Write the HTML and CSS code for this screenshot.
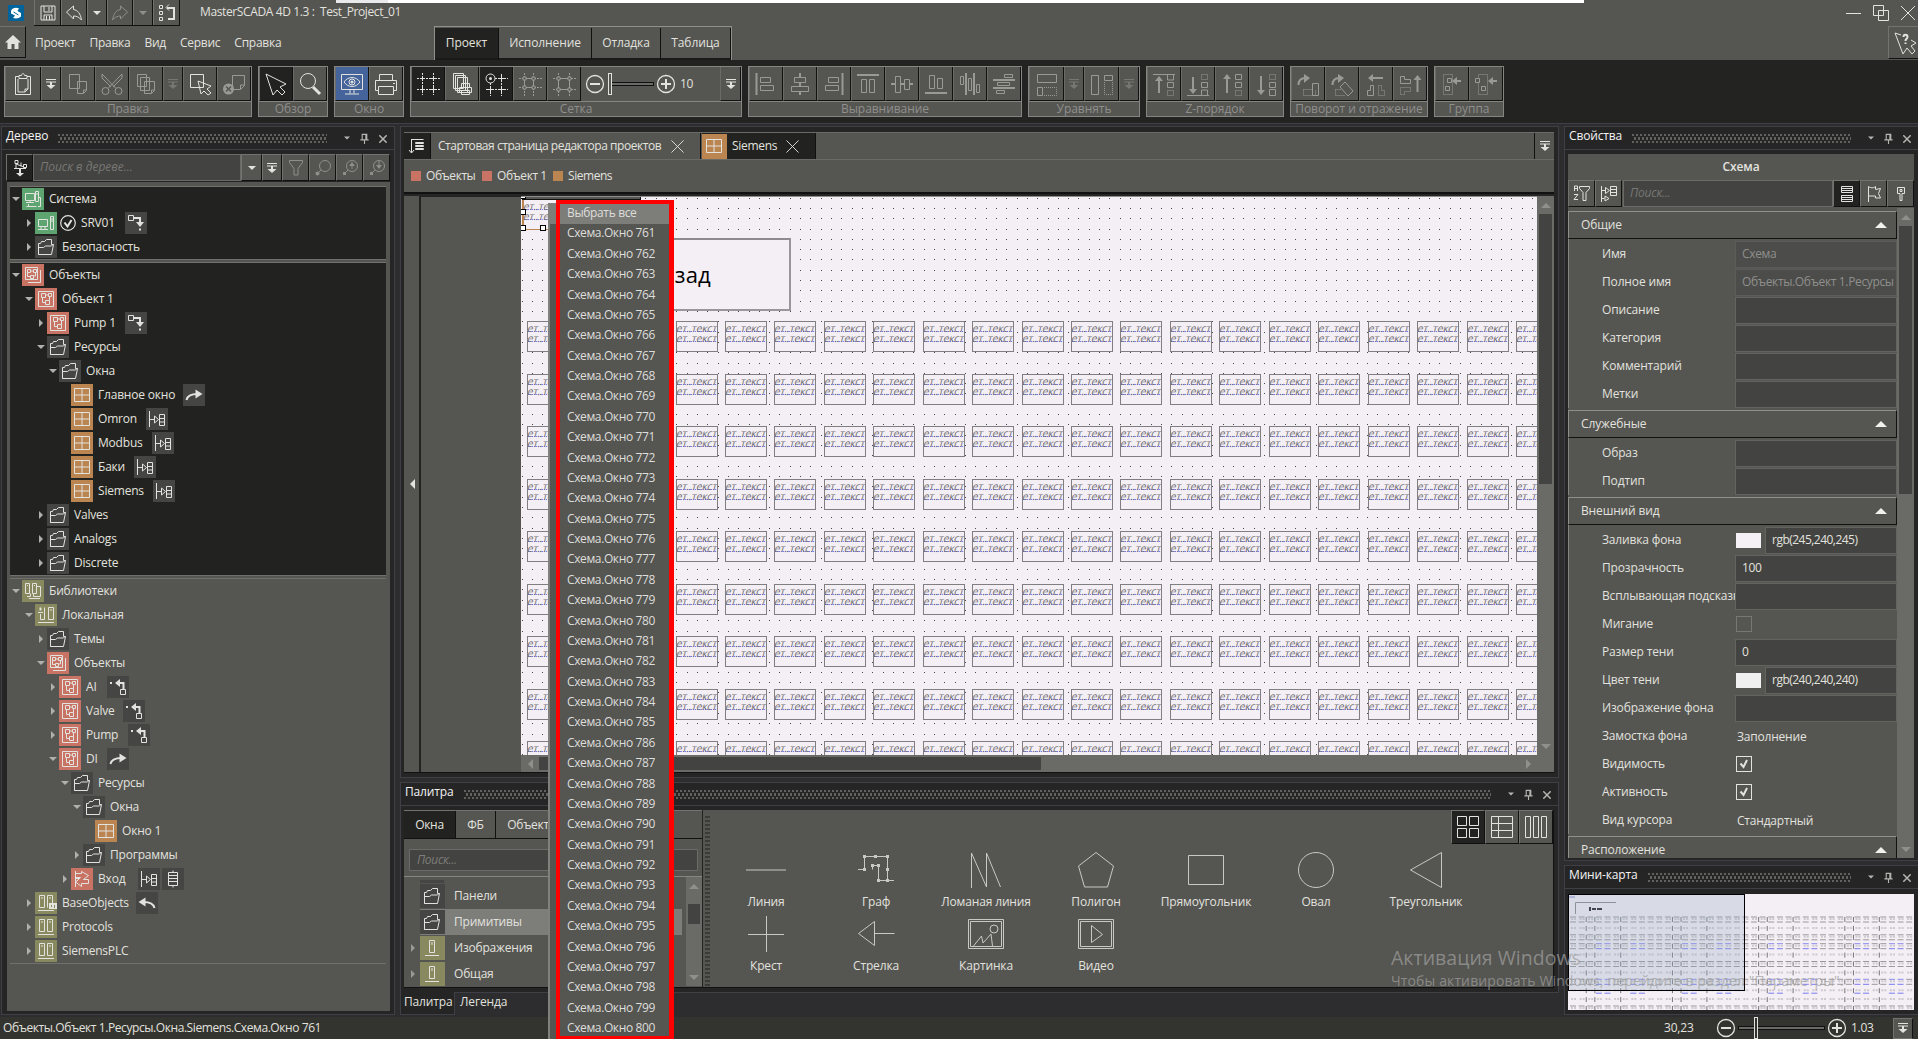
FILE: index.html
```html
<!DOCTYPE html>
<html lang="ru">
<head>
<meta charset="utf-8">
<title>MasterSCADA 4D 1.3</title>
<link rel="stylesheet" href="styles.css">
</head>
<body>
<svg class="defs" width="0" height="0" aria-hidden="true">
  <symbol id="save" viewBox="0 0 24 24"><path d="M5 5h14v14H5zM8 5v6h8V5M13 6v4M8 19v-5h8v5M10.500 15v4M13.500 15v4"/></symbol>
  <symbol id="undo" viewBox="0 0 24 24"><path d="M4.500 11l7-6v3.500c4 .5 7 4 8 10.500-2.500-3-5-4-8-4V18z"/></symbol>
  <symbol id="redo" viewBox="0 0 24 24"><path d="M19.500 11l-7-6v3.500c-4 .5-7 4-8 10.500 2.500-3 5-4 8-4V18z"/></symbol>
  <symbol id="swap" viewBox="0 0 24 24"><path d="M4.500 4.500h3v3h-3zM4.500 10.500h3v3h-3zM4.500 16.500h3v3h-3zM14 3.500l-3 3 3 3" /><path d="M12 7h7v11h-6" stroke-width="2"/></symbol>
  <symbol id="drop" viewBox="0 0 24 24"><path class="f" d="M8 10h8l-4 4z"/></symbol>
  <symbol id="more" viewBox="0 0 24 24"><path d="M7 7.500h10M7 10h10"/><path class="f" d="M11 10h2v3h3.500l-4.500 4-4.500-4H11z"/></symbol>
  <symbol id="home" viewBox="0 0 24 24"><path class="f" d="M12 5l8 7.500h-2.500V19h-4v-5h-3v5h-4v-6.500H4z"/></symbol>
  <symbol id="clip" viewBox="0 0 24 24"><path d="M8 4.500H4.500v18h15v-18H16M8 6.500h8v-3h-2.500c0-2.500-3-2.500-3 0H8zM7 7v13h7l3-3V7M14 20v-3h3"/></symbol>
  <symbol id="copy" viewBox="0 0 24 24"><path d="M3.500 2.500h10v14h-10zM11.500 9.500h9v9l-3 3h-6zM17.500 21v-3h3" style="fill:var(--b)"/></symbol>
  <symbol id="cut" viewBox="0 0 24 24"><path d="M2 2l13.500 14M22 2L8.500 16M2 2v4l9 9M22 2v4l-9 9"/><circle cx="5.500" cy="19" r="3.500"/><circle cx="18.500" cy="19" r="3.500"/></symbol>
  <symbol id="copies" viewBox="0 0 24 24"><path style="fill:var(--b)" d="M3.500 2.500h9v12h-9zM6.500 5.500h9v13h-9zM10.500 9.500h10v9l-3 3h-7zM17.500 21v-3h3"/></symbol>
  <symbol id="pick" viewBox="0 0 24 24"><path style="fill:var(--b)" d="M2.500 2.500h13v13h-13zM10 9l3 13 3-3 4 4 3-2-4-4 4-3z"/></symbol>
  <symbol id="del" viewBox="0 0 24 24"><path style="fill:var(--b)" d="M10.500 3.500h12v10l-4 4h-8zM18.500 17v-4h4"/><circle class="f" cx="6.500" cy="17" r="5.500"/><path d="M4 14.500l5 5M9 14.500l-5 5" style="stroke:var(--b);stroke-width:1.500"/></symbol>
  <symbol id="arrow" viewBox="0 0 24 24"><path d="M2 2l7 21 4-5 5 5 3-3-5-5 6-3z"/></symbol>
  <symbol id="lens" viewBox="0 0 24 24"><circle cx="10" cy="9" r="7.500"/><path d="M15 15l7 7" stroke-width="3"/></symbol>
  <symbol id="eye" viewBox="0 0 24 24"><path d="M1.500 2.500h21v15h-21zM10 17.500v4M14 17.500v4M5 22h14M4 10c4-6 12-6 16 0-4 6-12 6-16 0z"/><circle cx="12" cy="10" r="3"/><circle class="f" cx="12" cy="10" r="1.500"/></symbol>
  <symbol id="print" viewBox="0 0 24 24"><path d="M5.500 8V2.500h13V8M1.500 8.500h21v10h-3M4.500 18.500h-3v-10M4.500 14.500h15v8h-15z"/><path d="M19 11.500h2" /></symbol>
  <symbol id="grid" viewBox="0 0 24 24"><path stroke-dasharray="2 1" d="M6.500 1v22M17.500 1v22M1 6.500h23M1 17.500h23"/><path d="M4 6.500h5M15 6.500h5M4 17.500h5M15 17.500h5M6.500 4v5M17.500 4v5M6.500 15v5M17.500 15v5"/></symbol>
  <symbol id="pages" viewBox="0 0 24 24"><path style="fill:var(--b)" d="M3.500 1.500h10v15h-10zM5.500 3.500h10v15h-10zM7.500 5.500h10v15h-10zM11.500 11.500h8v4h-8zM9.500 15.500h12v5h-12zM11.500 18.500h8v4h-8z"/></symbol>
  <symbol id="snap" viewBox="0 0 24 24"><path stroke-dasharray="2 1" d="M6.500 11v13M17.500 2v22M11 6.500h14M2 17.500h23"/><path d="M15 6.500h5M15 17.500h5M4 17.500h5M17.500 4v5M17.500 15v5M6.500 15v5"/><circle cx="6.500" cy="6.500" r="4.500"/><circle class="f" cx="6.500" cy="6.500" r="1.500"/></symbol>
  <symbol id="snap2" viewBox="0 0 24 24"><path stroke-dasharray="2 1" d="M6.500 1v23M15.500 1v23M1 6.500h23M1 15.500h23"/><path style="fill:var(--b)" d="M5 5h3v3H5zM14 5h3v3h-3zM5 14h3v3H5zM14 14h3v3h-3zM8 6.500h6M8 15.500h6M6.500 8v6M15.500 8v6"/></symbol>
  <symbol id="snap3" viewBox="0 0 24 24"><path stroke-dasharray="2 1" d="M6.500 1v23M17.500 1v23M1 6.500h23M1 17.500h23"/><path style="fill:var(--b)" d="M5 5h3v3H5zM16 5h3v3h-3zM5 16h3v3H5zM16 16h3v3h-3zM8 6.500h8M8 17.500h8M6.500 8v8M17.500 8v8"/></symbol>
  <symbol id="al" viewBox="0 0 24 24"><path d="M2.500 1v22" stroke-width="2"/><path d="M6.500 5.500h10v5h-10zM6.500 13.500h13v5h-13z"/></symbol>
  <symbol id="ac" viewBox="0 0 24 24"><path d="M12 1v4M12 11v3M12 19v4" stroke-width="2"/><path d="M6.500 5.500h11v5h-11zM3.500 14.500h17v5h-17z"/></symbol>
  <symbol id="ar" viewBox="0 0 24 24"><path d="M20.500 1v22" stroke-width="2"/><path d="M6.500 5.500h10v5h-10zM3.500 13.500h13v5h-13z"/></symbol>
  <symbol id="at" viewBox="0 0 24 24"><path d="M1 3h22" stroke-width="2"/><path d="M5.500 7.500h5v13h-5zM13.500 7.500h5v13h-5z"/></symbol>
  <symbol id="am" viewBox="0 0 24 24"><path d="M1 12h4M11 12h3M19 12h4" stroke-width="2"/><path d="M5.500 4.500h5v16h-5zM14.500 7.500h5v10h-5z"/></symbol>
  <symbol id="ab" viewBox="0 0 24 24"><path d="M1 21h22" stroke-width="2"/><path d="M5.500 3.500h5v13h-5zM13.500 6.500h5v10h-5z"/></symbol>
  <symbol id="dh" viewBox="0 0 24 24"><path d="M8 1v22M16 1v22" stroke-width="2"/><path style="fill:var(--b)" d="M2.500 4.500h3v8h-3zM10.500 6.500h3v12h-3zM18.500 12.500h3v8h-3z"/></symbol>
  <symbol id="dv" viewBox="0 0 24 24"><path d="M1 8h22M1 16h22" stroke-width="2"/><path style="fill:var(--b)" d="M12.500 2.500h8v3h-8zM5.500 10.500h12v3h-12zM4.500 18.500h8v3h-8z"/></symbol>
  <symbol id="eq1" viewBox="0 0 24 24"><path d="M2.500 2.500h19v8h-19zM2.500 15.500h5v8h-5z"/><path stroke-dasharray="1 1" d="M9 15.500h12.500v8H9"/></symbol>
  <symbol id="eq2" viewBox="0 0 24 24"><path d="M1.500 3.500h7v19h-7zM14.500 3.500h8v5h-8z"/><path stroke-dasharray="1 1" d="M14.500 10v12.500h8V10"/></symbol>
  <symbol id="z1" viewBox="0 0 24 24"><path d="M1 2.500h22M15.500 3v5h6V3M15.500 10.500h6v5h-6z"/><path d="M7 6v15" stroke-width="2"/><path class="f" d="M3 9l4-5 4 5z"/><path stroke-dasharray="1 1" d="M15.500 18.500h6v5h-6z"/></symbol>
  <symbol id="z2" viewBox="0 0 24 24"><path d="M1 23.500h22M15.500 23v-5h6v5M15.500 10.500h6v5h-6z"/><path d="M7 5v14" stroke-width="2"/><path class="f" d="M3 17l4 5 4-5z"/><path stroke-dasharray="1 1" d="M15.500 2.500h6v5h-6z"/></symbol>
  <symbol id="z3" viewBox="0 0 24 24"><path d="M15.500 2.500h6v5h-6zM15.500 10.500h6v5h-6z"/><path d="M7 4v17" stroke-width="2"/><path class="f" d="M3 7l4-5 4 5z"/><path stroke-dasharray="1 1" d="M15.500 18.500h6v5h-6z"/></symbol>
  <symbol id="z4" viewBox="0 0 24 24"><path d="M15.500 17.500h6v6h-6zM15.500 10.500h6v5h-6z"/><path d="M7 4v17" stroke-width="2"/><path class="f" d="M3 18l4 5 4-5z"/><path stroke-dasharray="1 1" d="M15.500 2.500h6v5h-6z"/></symbol>
  <symbol id="r1" viewBox="0 0 24 24"><path d="M2.500 13c0-5 3-7 7-7" stroke-width="2"/><path class="f" d="M8 2l6 4-6 5z"/><path d="M16.500 11.500h6v12h-6z"/><path stroke-dasharray="1 1" d="M7.500 17.500h9M7.500 17.500v6h12v-6"/></symbol>
  <symbol id="r2" viewBox="0 0 24 24"><path d="M2.500 13c0-5 3-7 7-7" stroke-width="2"/><path class="f" d="M8 2l6 4-6 5z"/><path style="fill:var(--b)" d="M15 10l8 9-5 5-8-9z"/><path stroke-dasharray="1 1" d="M5.500 17.500h6M5.500 17.500v6h10"/></symbol>
  <symbol id="r3" viewBox="0 0 24 24"><path d="M6 6h13" stroke-width="2"/><path class="f" d="M9 2L4 6l5 4z"/><path d="M6.500 13.500h3v10h-6v-5h3z"/><path stroke-dasharray="1 1" d="M14.500 13.500h3v5h3v5h-6z"/></symbol>
  <symbol id="r4" viewBox="0 0 24 24"><path d="M19.500 6v14" stroke-width="2"/><path class="f" d="M15.500 8l4-5 4 5z"/><path d="M2.500 4.500h4v3h6v4h-10z"/><path stroke-dasharray="1 1" d="M2.500 15.500h10v4h-6v3h-4z"/></symbol>
  <symbol id="g1" viewBox="0 0 24 24"><path stroke-dasharray="1 1" d="M3.500 2.500h9v20h-9z"/><path style="fill:var(--b)" d="M7.500 6.500h4v4h-4zM5.500 14.500h4v4h-4z"/><path d="M15 9h6" stroke-width="2"/><path class="f" d="M17 5l-5 4 5 4z"/></symbol>
  <symbol id="g2" viewBox="0 0 24 24"><path stroke-dasharray="1 1" d="M4.500 2.500h9v20h-9z"/><path style="fill:var(--b)" d="M1.500 6.500h4v4h-4zM7.500 14.500h4v4h-4z"/><path d="M17 9h6" stroke-width="2"/><path class="f" d="M19 5l-5 4 5 4z"/></symbol>
  <symbol id="minus" viewBox="0 0 20 20"><circle cx="10" cy="10" r="8.500" stroke-width="1.300"/><path d="M5 10h10" stroke-width="2"/></symbol>
  <symbol id="plus" viewBox="0 0 20 20"><circle cx="10" cy="10" r="8.500" stroke-width="1.300"/><path d="M5 10h10M10 5v10" stroke-width="2"/></symbol>
  <symbol id="sort" viewBox="0 0 24 24"><path d="M6.500 5v14M4 16l2.500 3 2.500-3M6.500 5.500h12M10.500 8.500h8v1h-8zM10.500 11.500h8v1h-8zM10.500 14.500h8v1h-8z"/></symbol>
  <symbol id="close" viewBox="0 0 14 14"><path d="M.5.500l13 13M13.500.500l-13 13"/></symbol>
  <symbol id="sync" viewBox="0 0 24 24"><path d="M7 4.500h3v3H7zM8 8v4M8 8l8 3M6 12.500h12M13 6.500v4M15.500 8.500h3v3h-3z" /><path class="f" d="M11 12h2v5h3l-4 3.500-4-3.500h3z"/></symbol>
  <symbol id="funnel" viewBox="0 0 24 24"><path d="M5.500 4.500h13v2l-4.500 6v6.500h-4v-6.500l-4.500-6z"/></symbol>
  <symbol id="find" viewBox="0 0 24 24"><circle cx="14" cy="10" r="5.500"/><path d="M10 14l-3 3"/><circle class="f" cx="6.500" cy="17.500" r="2"/></symbol>
  <symbol id="findu" viewBox="0 0 24 24"><circle cx="14" cy="10" r="5.500"/><path d="M10 14l-3 3M14 13V8" /><path class="f" d="M11 10l3-4 3 4zM5 16h3v3H5z"/></symbol>
  <symbol id="findd" viewBox="0 0 24 24"><circle cx="14" cy="10" r="5.500"/><path d="M10 14l-3 3M14 5v6"/><path class="f" d="M11 9l3 4 3-4zM5 16h3v3H5z"/></symbol>
  <symbol id="az" viewBox="0 0 24 24"><path d="M4.500 9v-5h3v5M4.500 6.500h3M4 12.500h4l-4 5h4M9.500 4.500h10v2l-3.500 4v8h-3v-8l-3.500-4z"/></symbol>
  <symbol id="bind" viewBox="0 0 24 24"><path d="M4.500 4v16M4.500 8.500h4M8.500 5.500v6l4-3zM13.500 4.500h6v9h-6zM13.500 7.500h6M13.500 10.500h6M4.500 16.500h3M12 16.500l-4-2.500v5z"/></symbol>
  <symbol id="list" viewBox="0 0 24 24"><path d="M6.500 4.500h11v6h-11zM6.500 13.500h11v6h-11z"/><path d="M7 6.500h10M7 8.500h10M7 15.500h10M7 17.500h10"/></symbol>
  <symbol id="flag" viewBox="0 0 24 24"><path d="M6.500 20V4.500c2 1.500 5 2 7 0v3l5-1-2 5 2 4.500h-5v-2h-7"/></symbol>
  <symbol id="key" viewBox="0 0 24 24"><path d="M8.500 5.500h7v6h-2.500v7h-2v-7h-2.500z"/><path d="M11 7.500h2v2h-2z"/></symbol>
  <symbol id="pin" viewBox="0 0 12 12"><path d="M3.500 7V1.500h5V7M1.500 7.500h9M6 8v4M7.500 1v6"/></symbol>
  <symbol id="helpcur" viewBox="0 0 24 24"><path d="M1 2l8 21 4-6 5 6 3-3-4-5 5-3-5-3M1 2l6 2"/><path d="M9.500 6c0-3 4-3 4 0 0 2-2 1.500-2 4M11.500 11.500v1.500" stroke-width="2"/></symbol>

  <symbol id="sys" viewBox="0 0 22 22"><path d="M3.500 5.500h9v7h-9zM8 12.500v2M4 14.500h8M6.500 16v3M13.500 3.500h3v10h-3zM14 6h3M16 9.500h2.500v9H16M4.500 18.500h10"/></symbol>
  <symbol id="srv" viewBox="0 0 22 22"><path d="M3.500 7.500h9v7h-9zM6 14.500v3M10 14.500v3M3 17.500h10M15.500 4.500h3v13h-3zM15.500 7h3M15.500 9h3"/></symbol>
  <symbol id="folder" viewBox="0 0 22 22"><path d="M3.500 18.500V7.500h2l1-2h3l2-2h5v5h2l-2 10h-13V11.500h5l2-1.500h6l1.500-1.500"/></symbol>
  <symbol id="objs" viewBox="0 0 22 22"><path d="M3.500 3.500h12v12h-12zM6 18.500h12.500V6M5.500 5.500h3v3h-3zM11.500 5.500h3v3h-3zM8.500 11.500h3v3h-3zM8.500 7h3M5.500 8.500v4h3M11.500 12h2V8.500"/></symbol>
  <symbol id="obj" viewBox="0 0 22 22"><path d="M3.500 3.500h15v15h-15zM6.500 5.500h4v4h-4zM13.500 5.500h3v3h-3zM10.500 12.500h4v4h-4zM10.500 7h3M7.500 9.500v5h3M14.500 12.500V8.500"/></symbol>
  <symbol id="win" viewBox="0 0 22 22"><path d="M3.500 4.500h15v13h-15zM11 4.500v13M3.500 11h15"/></symbol>
  <symbol id="libs" viewBox="0 0 22 22"><path d="M3.500 3.500h4v10h-4zM10.500 3.500h4v10h-4zM14.500 6.500h4v10h-7v-3M5 16.500h3.500v-3M7 18.500h11M5.500 5v1M12.500 5v1"/></symbol>
  <symbol id="local" viewBox="0 0 22 22"><path d="M5.500 10v5.500h4v-12M13.500 3.500h5v12h-5zM3 18.500h16M3 8.500h5M16 5v2"/><path class="f" d="M4.500 3.500h2v3h-2z"/></symbol>
  <symbol id="lib" viewBox="0 0 22 22"><path d="M4.500 3.500h5v12h-5zM12.500 3.500h5v12h-5zM3 18.500h16M7 5v2M15 5v2"/></symbol>
  <symbol id="baselib" viewBox="0 0 22 22"><path d="M4.500 3.500h5v12h-5zM12.500 3.500h5v8M12.500 3.500v12M3 18.500h16M7 5v2M15 5v2"/><path class="f" d="M14 11h8v6h-8z"/><path d="M16.500 13v2M19.500 13v3" style="stroke:#8a8a60"/></symbol>
  <symbol id="onelib" viewBox="0 0 22 22"><path d="M8.500 3.500h5v12h-5zM4 18.500h14M11 5v3"/></symbol>
  <symbol id="inp" viewBox="0 0 22 22"><path d="M4.500 3v16M4.500 5.500h6v-2l7 4-5 4h5v4h-7v3l-6-4.500 4-3.500h-4M4.500 9.500h5l-4 4"/></symbol>
  <symbol id="b-down" viewBox="0 0 22 22"><path d="M3.500 3.500h5v5h-5z" /><path d="M9 6h6v5" stroke-width="2"/><path class="f" d="M11 10h8l-4 5zM14 16.500h2v2h-2z"/></symbol>
  <symbol id="b-up" viewBox="0 0 22 22"><path d="M13.500 13.500h5v5h-5z"/><path class="f" d="M3 6h2v2H3zM8 7l5-4v8z"/><path d="M12 7h4.500v6" stroke-width="2"/></symbol>
  <symbol id="b-fwd" viewBox="0 0 22 22"><path d="M3.500 16c1-5 5-6 11-6" stroke-width="2"/><path class="f" d="M12.500 5.500l7 4.500-7 4.500z"/></symbol>
  <symbol id="b-back" viewBox="0 0 22 22"><path d="M18.500 16c-1-5-5-6-11-6" stroke-width="2"/><path class="f" d="M9.500 5.500l-7 4.500 7 4.500z"/></symbol>
  <symbol id="b-bind" viewBox="0 0 22 22"><path d="M3.500 3v16M3.500 11.500h5M8.500 8v7l4-3.500zM13.500 6.500h5v11h-5zM13.500 10.500h5M13.500 14h5"/></symbol>
  <symbol id="b-db" viewBox="0 0 22 22"><path d="M6.500 4.500h9v13h-9zM6.500 7.500h9M6.500 10.500h9M6.500 13.500h9M11 2.500v2M11 17.500v2"/></symbol>

  <symbol id="p-line" viewBox="0 0 44 44"><path d="M2 22h40"/></symbol>
  <symbol id="p-graph" viewBox="0 0 44 44"><path d="M4 21.500h6.500v-13h23v24h-9v-15h-6v4"/><path class="f" d="M9 20h3v3H9zM9 7h3v3H9zM20 7h3v3h-3zM32 7h3v3h-3zM32 20h3v3h-3zM32 31h3v3h-3zM23 31h3v3h-3zM23 16h3v3h-3zM17 16h3v3h-3zM33 32h7v1h-7z"/></symbol>
  <symbol id="p-poly" viewBox="0 0 44 44"><path d="M7.500 40V5l15 34V5l14 34"/></symbol>
  <symbol id="p-pent" viewBox="0 0 44 44"><path d="M22 4.500l17.500 13.500-6 21h-23l-6-21z"/></symbol>
  <symbol id="p-rect" viewBox="0 0 44 44"><path d="M4.500 7.500h35v29h-35z"/></symbol>
  <symbol id="p-oval" viewBox="0 0 44 44"><circle cx="22" cy="22" r="17.500"/></symbol>
  <symbol id="p-tri" viewBox="0 0 44 44"><path d="M6.500 22L37.500 4.500v35z"/></symbol>
  <symbol id="p-cross" viewBox="0 0 44 44"><path d="M22.500 4v36M4 22.500h36"/></symbol>
  <symbol id="p-arrow" viewBox="0 0 44 44"><path d="M4.500 21.500l16-12v24zM20.500 21.500h20"/></symbol>
  <symbol id="p-pic" viewBox="0 0 44 44"><path d="M4.500 7.500h35v29h-35zM6.500 9.500h31v25h-31zM9.500 34l8-10 1.500 7 8-9 1.500 12"/><circle cx="30" cy="17" r="4"/></symbol>
  <symbol id="p-video" viewBox="0 0 44 44"><path d="M4.500 7.500h35v29h-35zM6.500 9.500h31v25h-31zM17.500 13.500l11 9-11 8z"/></symbol>
</svg>

<div class="app">
  <header class="top">
    <div class="titlebar">
      <svg class="logo" viewBox="0 0 16 16"><rect width="16" height="16" fill="#00639c"/><path d="M3 6c1-3 5-4 8-2.500L9.500 6 13 8v3.500c-2 2-5 2.500-8 1.500l2-2.500-4-2z" fill="#fff"/><path d="M5.500 7l5 3" stroke="#00639c"/></svg>
      <div class="quick" id="quick"></div>
      <div class="title">MasterSCADA 4D 1.3 :&nbsp; Test_Project_01</div>
      <div class="winctl">
        <svg width="16" height="16" viewBox="0 0 16 16"><path d="M0 8.500h15"/></svg>
        <svg width="16" height="16" viewBox="0 0 16 16"><path d="M.5.500h10v10H.5zM5.500 5.500h10v10h-10z" style="fill:#555552"/></svg>
        <svg width="16" height="16" viewBox="0 0 16 16"><path d="M1 1l14 14M15 1L1 15"/></svg>
      </div>
    </div>
    <div class="menubar">
      <div class="home"><svg class="ic"><use href="#home"/></svg></div>
      <nav class="menu"><span>Проект</span><span>Правка</span><span>Вид</span><span>Сервис</span><span>Справка</span></nav>
      <div class="modes"><span class="on m1">Проект</span><span class="m2">Исполнение</span><span class="m3">Отладка</span><span class="m4">Таблица</span></div>
      <div class="helpbtn"><svg class="ic"><use href="#helpcur"/></svg></div>
    </div>
    <div class="strip"></div>
  </header>

  <div class="ribbon" id="ribbon"></div>

  <main class="work">
    <section class="panel left">
      <div class="ptitle"><b>Дерево</b><i class="grip"></i><svg class="ic12"><use href="#drop"/></svg><svg class="ic10"><use href="#pin"/></svg><svg class="ic8"><use href="#close"/></svg></div>
      <div class="tsearch">
        <span class="btn on"><svg class="ic"><use href="#sync"/></svg></span>
        <span class="inp">Поиск в дереве...</span>
        <span class="btn n"><svg class="ic"><use href="#drop"/></svg></span>
        <span class="btn n2"><svg class="ic"><use href="#more"/></svg></span>
        <span class="btn dim"><svg class="ic"><use href="#funnel"/></svg></span>
        <span class="btn dim"><svg class="ic"><use href="#find"/></svg></span>
        <span class="btn dim"><svg class="ic"><use href="#findu"/></svg></span>
        <span class="btn dim"><svg class="ic"><use href="#findd"/></svg></span>
      </div>
      <div class="tree" id="tree"></div>
    </section>

    <div class="middle">
      <section class="panel doc">
        <div class="tabs">
          <span class="tbtn on"><svg class="ic"><use href="#sort"/></svg></span>
          <span class="tab t1">Стартовая страница редактора проектов<svg class="x"><use href="#close"/></svg></span>
          <span class="tab t2 on"><i class="wico"><svg width="22" height="22"><use href="#win"/></svg></i>Siemens<svg class="x"><use href="#close"/></svg></span>
          <span class="tend"><svg class="ic"><use href="#more"/></svg></span>
        </div>
        <div class="crumbs"><i class="r"></i><span class="c1">Объекты</span><i class="r"></i><span class="c2">Объект 1</span><i class="o"></i><span>Siemens</span></div>
        <div class="stage">
          <div class="fold"><i></i></div>
          <div class="void"></div>
          <div class="sheet" id="sheet">
            <div class="back">Назад</div>
            <div class="ruler"></div>
            <div class="sel"><span>ет..текст</span><span>ет..текст</span></div>
            <i class="h ha"></i><i class="h hb"></i><i class="h hc"></i><i class="h hd"></i>
          </div>
          <div class="vs"><i class="up"></i><b></b><i class="dn"></i></div>
          <div class="hs"><i class="lf"></i><b></b><i class="rt"></i></div>
        </div>
      </section>
      <section class="panel pal">
        <div class="ptitle"><b>Палитра</b><i class="grip"></i><svg class="ic12"><use href="#drop"/></svg><svg class="ic10"><use href="#pin"/></svg><svg class="ic8"><use href="#close"/></svg></div>
        <div class="pbody">
          <div class="pleft">
            <div class="ptabs"><span class="on p1">Окна</span><span class="p2">ФБ</span><span class="p3">Объекты</span></div>
            <div class="psearch">Поиск...</div>
            <div class="plist">
              <div class="prows">
                <div class="stub"></div>
                <div class="prow"><i class="ar0"></i><i class="box k"><svg width="22" height="22"><use href="#folder"/></svg></i>Панели</div>
                <div class="prow sel2"><i class="ar0"></i><i class="box k"><svg width="22" height="22"><use href="#folder"/></svg></i>Примитивы</div>
                <div class="prow"><i class="ar0 a"></i><i class="box g"><svg width="22" height="22"><use href="#onelib"/></svg></i>Изображения</div>
                <div class="prow"><i class="ar0 a"></i><i class="box g"><svg width="22" height="22"><use href="#onelib"/></svg></i>Общая</div>
              </div>
              <div class="vs s2"><i class="up"></i><b></b><i class="dn"></i></div>
            </div>
          </div>
          <div class="split"></div>
          <div class="pgrid" id="pgrid"></div>
          <div class="views">
            <span class="on"><svg width="24" height="24" viewBox="0 0 24 24"><path d="M1.500 1.500h9v9h-9zM13.500 1.500h9v9h-9zM1.500 13.500h9v9h-9zM13.500 13.500h9v9h-9z"/></svg></span>
            <span><svg width="24" height="24" viewBox="0 0 24 24"><path d="M1.500 1.500h21v21h-21zM1.500 8.500h21M1.500 15.500h21M8.500 1.500v21"/></svg></span>
            <span><svg width="24" height="24" viewBox="0 0 24 24"><path d="M1.500 1.500h5v21h-5zM9.500 1.500h5v21h-5zM17.500 1.500h5v21h-5z"/></svg></span>
          </div>
        </div>
      </section>
      <div class="ftabs"><span class="on">Палитра</span><span>Легенда</span></div>
    </div>

    <div class="rightcol">
      <section class="panel props">
        <div class="ptitle"><b>Свойства</b><i class="grip"></i><svg class="ic12"><use href="#drop"/></svg><svg class="ic10"><use href="#pin"/></svg><svg class="ic8"><use href="#close"/></svg></div>
        <div class="phead">Схема</div>
        <div class="tsearch pr">
          <span class="btn"><svg class="ic"><use href="#az"/></svg></span>
          <span class="btn"><svg class="ic"><use href="#bind"/></svg></span>
          <span class="inp">Поиск...</span>
          <span class="btn on"><svg class="ic"><use href="#list"/></svg></span>
          <span class="btn"><svg class="ic"><use href="#flag"/></svg></span>
          <span class="btn"><svg class="ic"><use href="#key"/></svg></span>
        </div>
        <div class="pscroll"><div class="groups" id="groups"></div><div class="vs s3"><i class="up"></i><b></b><i class="dn"></i></div></div>
      </section>
      <section class="panel mini">
        <div class="ptitle"><b>Мини-карта</b><i class="grip"></i><svg class="ic12"><use href="#drop"/></svg><svg class="ic10"><use href="#pin"/></svg><svg class="ic8"><use href="#close"/></svg></div>
        <div class="map"><svg id="map" width="345" height="116"></svg></div>
      </section>
    </div>
  </main>

  <footer class="status">
    <span class="path">Объекты.Объект 1.Ресурсы.Окна.Siemens.Схема.Окно 761</span>
    <span class="pos">30,23</span>
    <svg class="ic20"><use href="#minus"/></svg>
    <span class="slider z"><i></i></span>
    <svg class="ic20"><use href="#plus"/></svg>
    <span class="zoom">1.03</span>
    <span class="sbtn"><svg class="ic"><use href="#more"/></svg></span>
  </footer>

  <div class="popup" id="popup"></div>
  <div class="frame"></div>
  <div class="activate"><div class="a1">Активация Windows</div><div class="a2">Чтобы активировать Windows, перейдите в раздел "Параметры".</div></div>
</div>
<script src="app.js"></script>
</body>
</html>
```
FILE: styles.css
```css
*{box-sizing:border-box}
html,body{margin:0;height:100%;overflow:hidden}
body{background:#2d2d30;color:#e2e2df;font:12px/16px "Open Sans","Noto Sans",sans-serif;letter-spacing:-.3px}
i{font-style:normal}
svg{flex:none;fill:none;stroke:currentColor;stroke-width:1}
.f{fill:currentColor;stroke:none}
.defs{position:absolute}
.app{position:relative;width:1918px;height:1039px;display:flex;flex-direction:column;overflow:hidden}
.ic{width:24px;height:24px}
.ic20{width:20px;height:20px}
.ic12{width:18px;height:18px;color:#b5b5b2}
.ic10{width:11px;height:11px;color:#b5b5b2;stroke-width:1.200}
.ic8{width:8px;height:8px;color:#b5b5b2;stroke-width:2.600}

.top{position:relative;height:60px;background:#555552;display:flex;flex-direction:column}
.strip{position:absolute;left:336px;top:0;width:1248px;height:3px;background:linear-gradient(90deg,#e9e9ec 52px,#fff 52px)}
.titlebar{height:26px;display:flex;align-items:flex-start}
.logo{width:16px;height:16px;margin:5px 10px 0 8px;stroke:none}
.quick{display:flex;height:26px;border-bottom:1px solid #111}
.quick span{display:flex;align-items:center;justify-content:center;border-right:1px solid #111;border-left:1px solid #72726f;width:26px}
.quick span:first-child,.quick span:last-child{width:27px}
.quick .n{width:20px}
.quick .dim{color:#8e8e8b}
.title{margin:4px 0 0 20px;letter-spacing:-.38px;white-space:nowrap}
.winctl{margin:5px 2px 0 auto;display:flex;gap:11px}
.menubar{height:34px;display:flex}
.home{width:26px;height:32px;border:1px solid #72726f;border-left:0;border-right-color:#111;border-bottom-color:#111;display:flex;align-items:center;justify-content:center}
.menu{display:flex;gap:14px;padding:9px 0 0 9px;width:408px;letter-spacing:-.25px}
.modes{display:flex;border:1px solid #8f8f8c;border-bottom:0;height:34px;width:298px;padding-top:1px;letter-spacing:-.1px}
.modes span{border-right:1px solid #111;border-bottom:2px solid #1a1a19;display:flex;align-items:center;justify-content:center}
.m1{width:64px}.m2{width:93px}.m3{width:69px}.m4{width:70px}
.on{background:#222220!important;--b:#222220}
.helpbtn{margin-left:auto;width:30px;height:33px;border:1px solid #72726f;border-right:0;border-bottom-color:#111;padding:4px 0 0 5px}

.ribbon{height:63px;background:#232321;padding:6px 4px 0;display:flex;gap:6px}
.grp{border:1px solid #858582;background:#555552;height:51px;display:flex;flex-direction:column}
.btns{display:flex;height:35px;border-bottom:1px solid #858582}
.tb{--b:#555552;display:flex;align-items:center;justify-content:center;width:34px;border-right:1px solid #111;border-left:1px solid #6a6a67;border-bottom:1px solid #111;overflow:hidden}
.tb.n{width:20px}
.tb.dim{color:#999996}
.tb.n.dim{color:#767673}
.tb.blue{background:#44649b!important}
.glabel{color:#8f8f8c;text-align:center;line-height:14px;letter-spacing:-.05px}
.gridctl{display:flex;align-items:center;width:139px;padding-left:4px}
.slider{position:relative;height:4px;border:1px solid #111;background:#6a6a67}
.slider i{position:absolute;border:1px solid #e2e2df;background:#555552;width:4px;height:22px;top:-10px}
.slider.r{width:46px;margin:0 2px 0 3px}
.slider.r i{left:-1px}
.gridctl b{font-weight:400;margin-left:4px}

.work{height:894px;border-top:1px solid #3f3f46;padding:2px 0 0 1px;display:flex;gap:5px}
.panel{border:1px solid #3f3f46;background:#252526}
.left{width:394px;height:889px}
.ptitle{height:23px;border-bottom:1px solid #3f3f46;display:flex;align-items:center;padding:0 7px 0 4px;color:#f4f4f4;white-space:nowrap}
.ptitle b{font-weight:400;letter-spacing:-.15px;margin-top:-4px}
.grip{flex:1;height:9px;margin:1px 11px 0 10px;background:linear-gradient(90deg,#62625f 50%,transparent 50%) 0 0/4px 2px repeat-x,linear-gradient(90deg,#62625f 50%,transparent 50%) 2px 3px/4px 3px repeat-x,linear-gradient(90deg,#62625f 50%,transparent 50%) 0 7px/4px 2px repeat-x}
.ptitle .ic10{margin:1px 9px 0 3px}
.ptitle .ic8{margin-top:1px}
.tsearch{display:flex;height:27px;margin:4px 4px 0 4px}
.btn{width:27px;display:flex;align-items:center;justify-content:center;background:#555552;border:1px solid #72726f;border-right-color:#111;border-bottom-color:#111}
.btn.n{width:21px}.btn.n2{width:20px}
.btn.dim{color:#8e8e8b}
.inp{flex:1;background:#434341;border:1px solid #6a6a67;color:#777774;font-style:italic;padding:4px 6px;letter-spacing:0}
.tree{margin:1px 4px 0 5px;height:829px;background:#555552;padding:4px 4px 0 3px}
.sect{background:#222220;border-top:1px solid #70706d;border-bottom:1px solid #70706d;margin-bottom:2px}
.sect.lt{background:none;margin-top:0}
.row{display:flex;align-items:center;height:24px;white-space:nowrap}
.ex{width:13px;display:flex;justify-content:center;flex:none}
.row:first-child .ex{width:12px}
.ex.o::before{content:"";border:4px solid transparent;border-top:4px solid #b0b0ad;border-bottom:0}
.ex.c::before{content:"";border:4px solid transparent;border-left:4px solid #b0b0ad;border-right:0}
.box{width:22px;height:22px;flex:none;display:flex}
.k{background:#454543}.k2{background:#454543}.green{background:#5da470}.red{background:#c97364}.org{background:#ba8550}.g{background:#89895f}
.lbl{margin-left:5px;letter-spacing:-.2px}
.badge{margin-left:10px}
.badge + .badge{margin-left:2px}
.ok{margin-left:3px}

.middle{width:1159px}
.doc{height:652px;padding:5px 4px 0 3px}
.tabs{height:28px;display:flex;background:#555552;border-bottom:1px solid #6a6a67;border-top:1px solid #6a6a67}
.tbtn{width:27px;display:flex;align-items:center;justify-content:center;border-right:1px solid #111}
.tab{display:flex;align-items:center;white-space:nowrap;border-right:1px solid #111;letter-spacing:-.45px}
.t1{width:270px;padding-left:7px;justify-content:space-between;padding-right:16px}
.t2{width:114px;padding-left:0;margin-left:1px;letter-spacing:-.28px}
.x{width:13px;height:13px;margin-left:9px}
.wico{width:25px;height:25px;background:#ba8550;margin-right:5px;padding:1px 1px}
.tend{margin-left:auto;width:20px;border-left:1px solid #111;display:flex;align-items:center;justify-content:center;overflow:hidden}
.crumbs{height:34px;background:#555552;border-bottom:2px solid #111;display:flex;align-items:center;padding-left:7px;letter-spacing:-.45px}
.crumbs i{width:10px;height:10px;margin-right:5px}
.crumbs .r{background:#c97364}.crumbs .o{background:#ba8550}
.c1,.c2{width:56px}
.stage{margin-top:2px;height:577px;background:#555552;display:grid;grid-template:559px 17px/17px 100px 1016px 17px;border-bottom:1px solid #111}
.fold{grid-row:1/3;border-right:2px solid #222220;display:flex;align-items:center}
.fold i{border:5px solid transparent;border-right:5px solid #e2e2df;border-left:0;margin-left:6px}
.void{grid-row:1/3;border-top:1px solid #222}
.sheet{position:relative;background:#f4eff5;overflow:hidden;border-top:1px solid #8f8f8c}
.sheet svg{position:absolute;left:0;top:0}
.cell,.sel{position:absolute;width:41.500px;height:31px;border:1px solid #807e80;background:#f4eff5;overflow:hidden;color:#6f6d72;font-size:10.500px;line-height:12px;letter-spacing:-.25px}
.cell span,.sel span{display:block;width:42px;height:10px;border-bottom:1px dotted #6a66e8;white-space:nowrap;transform:skewX(-14deg)}
.back{position:absolute;left:41px;top:41px;width:229px;height:73px;border:2px solid #98969a;border-top-color:#8d8b8e;background:#f4eff5;color:#000;font-size:22px;line-height:69px;letter-spacing:.2px;text-align:center;z-index:1;padding-left:4px}
.ruler{position:absolute;left:1px;top:-1px;width:119px;height:4px;background:#555552;border-right:1px solid #111;border-bottom:1px solid #111;z-index:3}
.sel{left:1px;top:2px;width:41px;border:0;border-left:2px solid #ba8550;border-bottom:1px solid #ba8550;padding-top:1px}
.h{position:absolute;width:6px;height:6px;background:#fff;border:1px solid #000;z-index:4}
.ha{left:-1px;top:12px}.hb{left:-1px;top:28px}.hc{left:19px;top:28px}.hd{left:-1px;top:-4px}
.vs{background:#6a6a67;display:flex;flex-direction:column;align-items:center;padding-left:2px;padding-right:2px}
.vs b{background:#434341;width:100%;height:270px}
.vs .up{border:5px solid transparent;border-bottom:5px solid #8f8f8c;border-top:0;margin:7px 0 6px;width:0}
.vs .dn{border:5px solid transparent;border-top:5px solid #8f8f8c;border-bottom:0;margin-top:auto;margin-bottom:6px;width:0}
.hs{grid-column:3/5;background:#6a6a67;display:flex;align-items:center;padding:2px 0}
.hs b{background:#434341;height:13px;width:502px}
.hs .lf{border:5px solid transparent;border-right:5px solid #8f8f8c;border-left:0;margin:0 6px 0 7px}
.hs .rt{border:5px solid transparent;border-left:5px solid #8f8f8c;border-right:0;margin-left:auto;margin-right:23px}

.pal{margin-top:4px;height:211px;position:relative}
.pbody{display:flex;margin:4px 4px 0 3px;height:178px;background:#555552;border-bottom:1px solid #111;border-right:1px solid #111;position:relative}
.pleft{width:299px;border-right:1px solid #222}
.ptabs{display:flex;height:29px;border-bottom:1px solid #111;border-top:1px solid #72726f;width:298px}
.ptabs span{display:flex;align-items:center;justify-content:center;border-right:1px solid #111}
.p1{width:52px}.p2{width:40px}.p3{width:74px}
.psearch{margin:10px 4px 0 5px;height:22px;background:#434341;border:1px solid #6a6a67;color:#7d7d7a;font-style:italic;padding:2px 7px}
.plist{display:flex;margin-top:5px;height:110px;border-top:1px solid #858582}
.prows{flex:1;overflow:hidden}
.stub{margin-left:16px;width:24px;height:3px;margin-top:3px;background:#454543}
.prow{height:26px;display:flex;align-items:center;width:278px;letter-spacing:-.2px}
.prow .box{width:25px;height:24px;margin-right:9px;padding:1px}
.ar0{width:16px;padding-left:7px}
.ar0.a::before{content:"";display:block;width:0;border:4px solid transparent;border-left:4px solid #999996;border-right:0}
.sel2{background:linear-gradient(90deg,transparent 16px,#7d7d7a 16px)}
.s2{width:16px}.s2 b{height:20px;margin-top:9px}
.split{width:5px;margin:6px 1px 0 2px;background:linear-gradient(#3a3a38 50%,transparent 50%) 0 0/4px 4px}
.pgrid{display:grid;grid-template-columns:repeat(7,110px);grid-auto-rows:64px;margin:38px 0 0 0}
.pi{display:flex;flex-direction:column;align-items:center;white-space:nowrap;color:#e2e2df;letter-spacing:-.15px}
.pi svg{width:44px;height:44px;color:#c8c8c5}
.pi span{margin-top:2px}
.views{position:absolute;right:0;top:0;display:flex}
.views span{width:34px;height:34px;display:flex;align-items:center;justify-content:center;border:1px solid #72726f;border-right-color:#111;border-bottom-color:#111}
.ftabs{display:flex;margin-top:-1px;height:23px;position:relative;letter-spacing:-.15px}
.ftabs span{padding:2px 5px 0}
.ftabs .on{background:#252526!important;width:55px;padding-left:3px;border:1px solid #3f3f46;border-top:0}

.rightcol{width:354px}
.props{height:735px}
.props,.mini{border-right:0}
.rightcol .ptitle{padding-right:7px}
.phead{margin:4px 4px 0 3px;height:26px;background:#555552;text-align:center;font-weight:600;line-height:26px;letter-spacing:-.1px}
.pr{margin:0 4px 0 3px;background:#555552}
.pr .inp{margin:0 0 0 1px;letter-spacing:-.2px}
.pscroll{margin:0 4px 0 3px;height:651px;display:flex;background:#555552;padding-top:1px}
.groups{flex:1;overflow:hidden;padding-top:3px;letter-spacing:-.15px}
.s3{width:17px}.s3 b{height:268px}
.gh{height:28px;border-top:1px solid #8f8f8c;border-left:1px solid #8f8f8c;border-right:1px solid #111;border-bottom:1px solid #111;display:flex;align-items:center;justify-content:space-between;padding:0 9px 0 12px}
.gh::after{content:"";border:6px solid transparent;border-bottom:6px solid #f0f0ee;border-top:0}
.gb{border-left:1px solid #858582;padding:1px 0 0;margin-bottom:2px}
.pp{height:28px;display:flex;align-items:center;padding-left:33px;white-space:nowrap}
.pp>span{width:133px;overflow:hidden}
.pv{flex:1;height:27px;background:#434341;border:1px solid #63635f;padding:4px 6px;overflow:hidden;letter-spacing:-.35px}
.pv.rgb{letter-spacing:-.52px}
.pv.dis{background:#4c4c4a;color:#8f8f8c;border-color:#5c5c59}
.pv.txt{background:none;border:0;padding-left:2px;padding-top:6px;letter-spacing:-.2px}
.chk{width:16px;height:16px;border:1px solid #777774;margin-left:1px;display:flex}
.chk.y{border-color:#e2e2df}
.sw{width:25px;height:15px;background:#f5f0f5;margin:0 4px 0 1px}
.mini{margin-top:4px;height:150px}
.map{margin:5px 4px 0 3px;height:116px;background:#f4eff5}

.status{height:22px;background:#333330;display:flex;align-items:center}
.path{padding-left:3px;letter-spacing:-.42px;width:1664px}
.pos{width:52px;letter-spacing:-.2px}
.z{width:87px;margin:0 2px}
.z i{left:15px;background:#333330}
.zoom{margin-left:4px;width:42px;letter-spacing:-.3px}
.sbtn{width:20px;height:21px;background:#555552;border:1px solid #72726f;border-right-color:#111;display:flex;align-items:center;justify-content:center;overflow:hidden}

.popup{position:absolute;left:548px;top:203px;width:124px;height:840px;background:#555552;border-left:2px solid #80807d;border-top:1px solid #80807d;z-index:10}
.popup div{height:20.380px;line-height:17.500px;padding-left:17px;letter-spacing:-.38px;white-space:nowrap;color:#dededb}
.popup div:first-child{background:#7d7d7a;letter-spacing:-.35px}
.frame{position:absolute;left:556px;top:200px;width:118px;height:840px;border:4px solid #f00;border-right-width:5px;z-index:11}
.activate{position:absolute;left:1391px;top:943px;color:rgba(160,160,158,.72);letter-spacing:0;white-space:nowrap;z-index:12}
.a1{font-size:19.500px;line-height:30px;letter-spacing:.03px}
.a2{font-size:14px;line-height:16px;letter-spacing:.12px}
```
FILE: app.js
```js
const use = (id, cls, w) => `<svg class="${cls || ''}"${w ? ` width="${w}" height="${w}"` : ''}><use href="#${id}"/></svg>`;
const el = id => document.getElementById(id);

// Quick access buttons
el('quick').innerHTML = [['save', ''], ['undo', ''], ['drop', 'n'], ['redo', 'dim'], ['drop', 'n dim'], ['swap', '']]
  .map(([i, c]) => `<span class="${c}">${use(i, 'ic')}</span>`).join('');

// Ribbon groups: [label, [[icon, classes, width]]]
const ribbon = [
  ['Правка', [['clip', '', 36], ['more', 'n'], ['copy', 'dim'], ['cut', 'dim'], ['copies', 'dim'], ['more', 'n dim'], ['pick', ''], ['del', 'dim']]],
  ['Обзор', [['arrow', 'on'], ['lens', '']]],
  ['Окно', [['eye', 'blue'], ['print', '']]],
  ['Сетка', [['grid', 'on'], ['pages', ''], ['snap', 'on'], ['snap2', 'dim'], ['snap3', 'dim'], ['ctl'], ['more', 'n', 21]]],
  ['Выравнивание', ['al', 'ac', 'ar', 'at', 'am', 'ab', 'dh', 'dv'].map(i => [i, 'dim'])],
  ['Уравнять', [['eq1', 'dim', 35], ['more', 'n dim'], ['eq2', 'dim', 35], ['more', 'n dim']]],
  ['Z-порядок', ['z1', 'z2', 'z3', 'z4'].map(i => [i, 'dim'])],
  ['Поворот и отражение', ['r1', 'r2', 'r3', 'r4'].map(i => [i, 'dim'])],
  ['Группа', [['g1', 'dim'], ['g2', 'dim']]]
];
const gridCtl = `<div class="gridctl">${use('minus', 'ic20')}<span class="slider r"><i></i></span>${use('plus', 'ic20')}<b>10</b></div>`;
el('ribbon').innerHTML = ribbon.map(([label, btns]) =>
  `<div class="grp"><div class="btns">${btns.map(([i, c, w]) => i === 'ctl' ? gridCtl :
    `<span class="tb ${c}"${w ? ` style="width:${w}px"` : ''}>${use(i, 'ic')}</span>`).join('')}</div><div class="glabel">${label}</div></div>`).join('');

// Project tree: [level, state, colour, icon, label, label width, badges]
const sections = [
  ['', [
    [0, 'o', 'green', 'sys', 'Система'],
    [1, 'c', 'green', 'srv', 'SRV01', 34, 'b-down'],
    [1, 'c', 'k', 'folder', 'Безопасность']]],
  ['', [
    [0, 'o', 'red', 'objs', 'Объекты'],
    [1, 'o', 'red', 'obj', 'Объект 1'],
    [2, 'c', 'red', 'obj', 'Pump 1', 41, 'b-down'],
    [2, 'o', 'k', 'folder', 'Ресурсы'],
    [3, 'o', 'k', 'folder', 'Окна'],
    [4, '', 'org', 'win', 'Главное окно', 75, 'b-fwd'],
    [4, '', 'org', 'win', 'Omron', 38, 'b-bind'],
    [4, '', 'org', 'win', 'Modbus', 44, 'b-bind'],
    [4, '', 'org', 'win', 'Баки', 26, 'b-bind'],
    [4, '', 'org', 'win', 'Siemens', 45, 'b-bind'],
    [2, 'c', 'k', 'folder', 'Valves'],
    [2, 'c', 'k', 'folder', 'Analogs'],
    [2, 'c', 'k', 'folder', 'Discrete']]],
  ['lt', [
    [0, 'o', 'g', 'libs', 'Библиотеки'],
    [1, 'o', 'g', 'local', 'Локальная'],
    [2, 'c', 'k', 'folder', 'Темы'],
    [2, 'o', 'red', 'objs', 'Объекты'],
    [3, 'c', 'red', 'obj', 'AI', 11, 'b-up'],
    [3, 'c', 'red', 'obj', 'Valve', 27, 'b-up'],
    [3, 'c', 'red', 'obj', 'Pump', 32, 'b-up'],
    [3, 'o', 'red', 'obj', 'DI', 11, 'b-fwd'],
    [4, 'o', 'k', 'folder', 'Ресурсы'],
    [5, 'o', 'k', 'folder', 'Окна'],
    [6, '', 'org', 'win', 'Окно 1'],
    [5, 'c', 'k', 'folder', 'Программы'],
    [4, 'c', 'red', 'inp', 'Вход', 30, 'b-bind b-db'],
    [1, 'c', 'g', 'baselib', 'BaseObjects', 64, 'b-back'],
    [1, 'c', 'g', 'lib', 'Protocols'],
    [1, 'c', 'g', 'lib', 'SiemensPLC']]]
];
const okMark = '<svg class="ok" width="16" height="16" viewBox="0 0 16 16"><circle cx="8" cy="8" r="7.300" stroke-width="1.200"/><path d="M4.500 7.500l3 4 4-6.500" stroke-width="2"/></svg>';
el('tree').innerHTML = sections.map(([cls, rows]) => `<div class="sect ${cls}">${rows.map(([lv, st, col, ic, txt, w, bd]) =>
  `<div class="row" style="padding-left:${lv * 12}px"><i class="ex ${st}"></i><i class="box ${col}">${use(ic, '', 22)}</i>${txt === 'SRV01' ? okMark : ''}<span class="lbl"${w ? ` style="width:${w}px"` : ''}>${txt}</span>${bd ? bd.split(' ').map(b => `<i class="box badge k2">${use(b, '', 22)}</i>`).join('') : ''}</div>`).join('')}</div>`).join('');

// Drawing sheet: snap dots and the table of link cells
const sheet = el('sheet');
let dots = '';
for (let r = 0; r < 55; r++) for (let c = 0; c < 99; c++)
  dots += `M${Math.round(0.7 + c * 10.31)} ${Math.round(0.6 + r * 10.31)}.5h1`;
let cells = `<svg width="1016" height="559"><path d="${dots}" stroke="#48454a"/></svg>`;
for (let r = 0; r < 9; r++) for (let c = 0; c < 21; c++)
  cells += `<div class="cell" style="left:${Math.round(6.2 + c * 49.44)}px;top:${Math.round(124 + r * 52.5)}px"><span>ет..текст</span><span>ет..текст</span></div>`;
sheet.insertAdjacentHTML('afterbegin', cells);

// Palette primitives
el('pgrid').innerHTML = [['line', 'Линия'], ['graph', 'Граф'], ['poly', 'Ломаная линия'], ['pent', 'Полигон'], ['rect', 'Прямоугольник'], ['oval', 'Овал'], ['tri', 'Треугольник'], ['cross', 'Крест'], ['arrow', 'Стрелка'], ['pic', 'Картинка'], ['video', 'Видео']]
  .map(([i, t]) => `<div class="pi">${use('p-' + i)}<span>${t}</span></div>`).join('');

// Property groups
const field = (v, c) => `<div class="pv ${c || ''}">${v || ''}</div>`;
const check = y => `<div class="chk${y ? ' y' : ''}">${y ? '<svg width="14" height="14" viewBox="0 0 14 14"><path d="M3.500 6.500l3 3.500 3.500-7" stroke-width="2"/></svg>' : ''}</div>`;
const colour = v => `<i class="sw" style="background:${v}"></i>${field(v, 'rgb')}`;
const groups = [
  ['Общие', [['Имя', field('Схема', 'dis')], ['Полное имя', field('Объекты.Объект 1.Ресурсы', 'dis')], ['Описание', field()], ['Категория', field()], ['Комментарий', field()], ['Метки', field()]]],
  ['Служебные', [['Образ', field()], ['Подтип', field()]]],
  ['Внешний вид', [['Заливка фона', colour('rgb(245,240,245)')], ['Прозрачность', field('100')], ['Всплывающая подсказка', field()], ['Мигание', check(false)], ['Размер тени', field('0')], ['Цвет тени', colour('rgb(240,240,240)')], ['Изображение фона', field()], ['Замостка фона', field('Заполнение', 'txt')], ['Видимость', check(true)], ['Активность', check(true)], ['Вид курсора', field('Стандартный', 'txt')]]],
  ['Расположение', []]
];
el('groups').innerHTML = groups.map(([t, rows]) => `<div class="gh">${t}</div>${rows.length ? `<div class="gb">${rows.map(([n, v]) => `<div class="pp"><span>${n}</span>${v}</div>`).join('')}</div>` : ''}`).join('');

// Mini map
let m = '';
for (let r = 0; r < 11; r++) {
  const y = 23 + r * 8.9;
  const strong = [0, 2, 3, 5, 7, 10].includes(r);
  for (let c = 0; c < 40; c++) {
    const x = 2 + c * 8.62, k = c % 10;
    const blue = (r === 3 || r === 7 || r === 8) && (k === 3 || k === 4 || k === 7 || k === 8);
    const g = strong ? '#9a979b' : '#c2bec3';
    if (strong) m += `<path d="M${x} ${y.toFixed(1)}h6" stroke="${blue ? '#8b8bf0' : g}"/>`;
    m += `<path d="M${x + 1} ${(y + 2).toFixed(1)}h5" stroke="#cdc9ce" stroke-width="2" stroke-dasharray="2 1"/>`;
    if (strong || blue) m += `<path d="M${x} ${(y + 5).toFixed(1)}h6" stroke="${blue ? '#7a7af0' : g}"/>`;
    if (k === 2 || k === 3 || k === 6) m += `<path d="M${x - 1} ${y.toFixed(1)}v5" stroke="#77757a"/>`;
  }
}
m += '<path d="M7.500 20V8.500H48" stroke="#8a8a8c"/><path d="M22 13v4M24 15h4M29 15h5" stroke="#222" stroke-width="2"/><path d="M1 3h6" stroke="#8b8bd0"/>';
m += '<rect x=".5" y=".5" width="176" height="96" fill="#8ea8c0" fill-opacity=".28" stroke="#000"/>';
el('map').innerHTML = m;

// Object picker under the cursor
let items = '<div>Выбрать все</div>';
for (let n = 761; n <= 800; n++) items += `<div>Схема.Окно ${n}</div>`;
el('popup').innerHTML = items;
```
